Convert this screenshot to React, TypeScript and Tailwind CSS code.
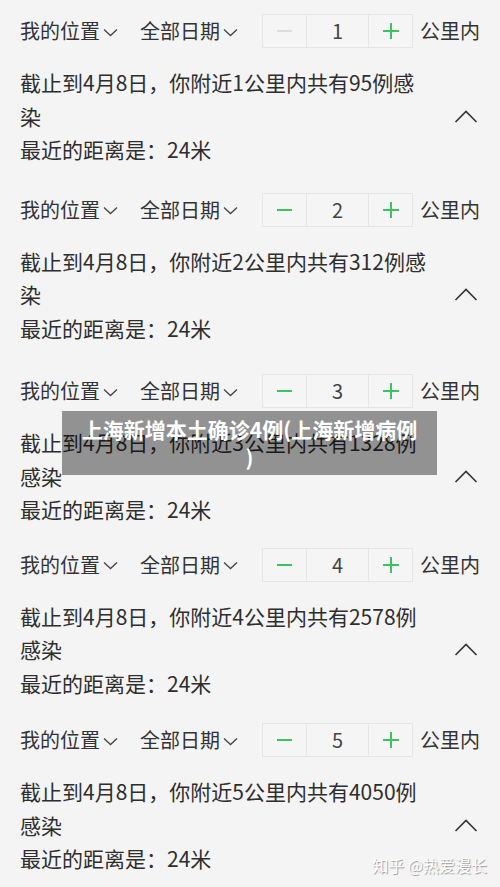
import React from "react";

const font = { fontFamily: '"Noto Sans CJK SC", "Noto Sans", sans-serif' };

const blocks = [
  { km: 1, line1: "截止到4月8日，你附近1公里内共有95例感", line2: "染", minusOff: true, pt: "pt-[14px]" },
  { km: 2, line1: "截止到4月8日，你附近2公里内共有312例感", line2: "染", pt: "pt-[16px]" },
  { km: 3, line1: "截止到4月8日，你附近3公里内共有1328例", line2: "感染", pt: "pt-[19px]" },
  { km: 4, line1: "截止到4月8日，你附近4公里内共有2578例", line2: "感染", pt: "pt-[11px]" },
  { km: 5, line1: "截止到4月8日，你附近5公里内共有4050例", line2: "感染", pt: "pt-[13px]" },
];

function ChevronDown() {
  return (
    <svg width="15" height="9" viewBox="0 0 15 9" className="ml-[3px] mt-[2px] shrink-0">
      <path d="M1 1.5 L7.5 7.5 L14 1.5" fill="none" stroke="#444" strokeWidth="1.3" />
    </svg>
  );
}

function ChevronUp() {
  return (
    <svg width="24" height="13" viewBox="0 0 24 13">
      <path d="M1.5 12 L12 1.5 L22.5 12" fill="none" stroke="#333" strokeWidth="1.6" />
    </svg>
  );
}

type BlockProps = { km: number; line1: string; line2: string; minusOff?: boolean; pt: string };

function Block({ km, line1, line2, minusOff, pt }: BlockProps) {
  return (
    <div className={`${pt} pb-[10px] pl-[20px] pr-[22px]`}>
      <div className="flex items-center h-[34px] text-[20px] text-[#333] whitespace-nowrap">
        <div className="flex items-center w-[120px] shrink-0">
          <span>我的位置</span>
          <ChevronDown />
        </div>
        <div className="flex items-center w-[122px] shrink-0">
          <span>全部日期</span>
          <ChevronDown />
        </div>
        <div className="flex h-[34px] shrink-0 border border-[#e6e6e6] bg-[#f5f5f5]">
          <div className="w-[44px] flex items-center justify-center border-r border-[#e6e6e6]">
            <div className={`w-[15px] h-[2px] ${minusOff ? "bg-[#dcdcdc]" : "bg-[#3dc261]"}`} />
          </div>
          <div className="w-[62px] flex items-center justify-center border-r border-[#e6e6e6] text-[20px] text-[#444]">
            {km}
          </div>
          <div className="w-[43px] flex items-center justify-center relative">
            <div className="w-[16px] h-[2px] bg-[#3dc261]" />
            <div className="absolute w-[2px] h-[16px] bg-[#3dc261]" />
          </div>
        </div>
        <span className="ml-[7px] shrink-0">公里内</span>
      </div>
      <div className="mt-[18px] text-[21px] leading-[33.5px] text-[#2e2e2e] whitespace-nowrap">
        <div>{line1}</div>
        <div className="flex items-center justify-between">
          <span>{line2}</span>
          <ChevronUp />
        </div>
        <div>最近的距离是：24米</div>
      </div>
    </div>
  );
}

export default function App() {
  return (
    <div className="relative w-[500px] h-[887px] overflow-hidden bg-[#f4f4f4]" style={font}>
      {blocks.map((b) => (
        <Block key={b.km} {...b} />
      ))}
      <div className="absolute left-[62px] top-[411px] w-[375px] h-[64px] bg-black/40 flex items-center justify-center">
        <div className="text-white font-bold text-[21px] leading-[28px] text-center">
          上海新增本土确诊4例(上海新增病例
          <br />)
        </div>
      </div>
      <div className="absolute right-[13px] bottom-[10px] text-[16px] text-white [text-shadow:1px_1px_1px_#999]">
        知乎 @热爱漫长
      </div>
    </div>
  );
}
